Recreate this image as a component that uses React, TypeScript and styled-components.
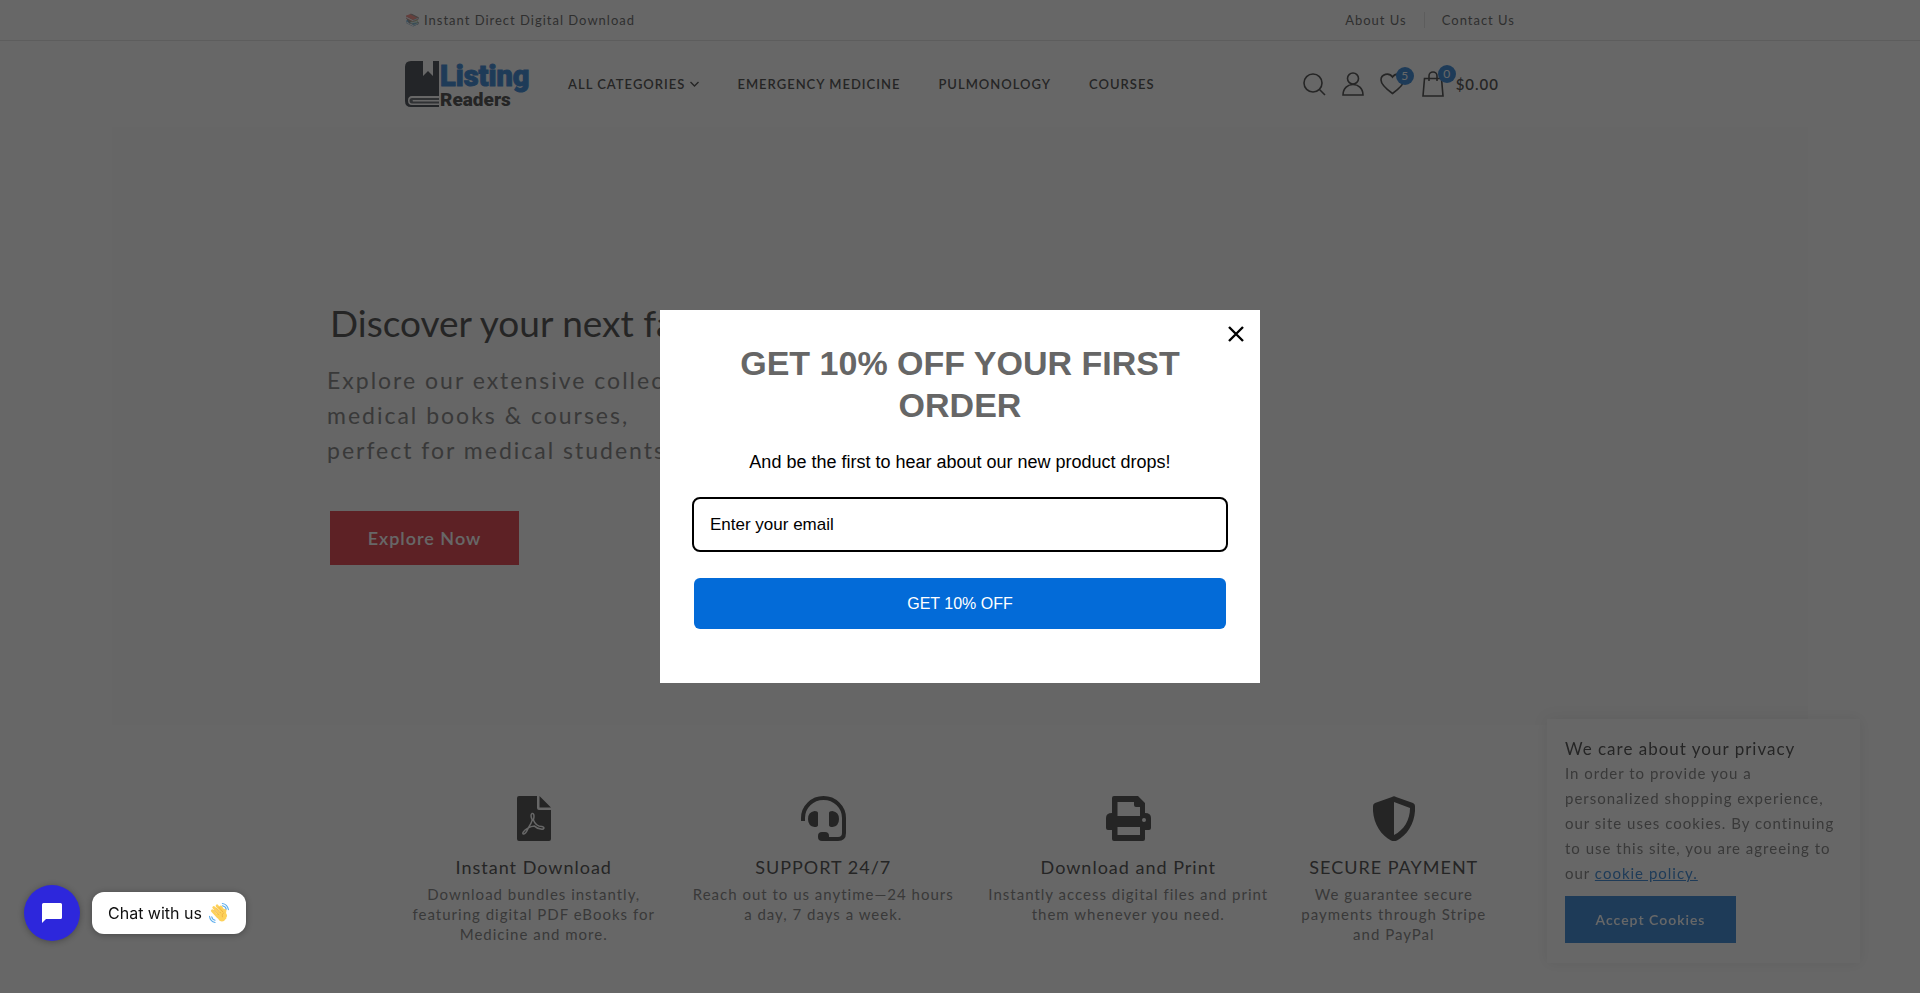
import React from 'react';
import styled, { createGlobalStyle } from 'styled-components';

const Global = createGlobalStyle`
  *, *::before, *::after { box-sizing: border-box; }
  html, body { height: 100%; }
  body {
    margin: 0;
    overflow: hidden;
    background: #fff;
    color: #666;
    font-family: Lato, "Noto Color Emoji", sans-serif;
    font-size: 15px;
    letter-spacing: 1px;
  }
  h1, h2, h3, p { margin: 0; font-weight: 400; }
  a { color: inherit; text-decoration: none; }
  button, input { font: inherit; border: 0; }
  button { cursor: pointer; }
`;

const Container = styled.div`
  display: flex;
  align-items: center;
  width: 100%;
  max-width: 1140px;
  margin: 0 auto;
  padding: 0 15px;
`;

const TopBar = styled.div`
  border-bottom: 1px solid #ddd;
  font-size: 13px;
  line-height: 40px;
  color: #444;
`;

const Announcement = styled.p`
  display: flex;
  align-items: center;
  gap: 4px;
  flex: 1;
`;

const Emoji = styled.span<{ $size: number; $faded?: boolean }>`
  font-family: "Noto Color Emoji", sans-serif;
  font-size: ${p => p.$size}px;
  letter-spacing: 0;
  opacity: ${p => (p.$faded ? 0.7 : 1)};
`;

const TopLinks = styled.nav`
  display: flex;
  align-items: center;
`;

const TopLink = styled.a`
  & + & {
    display: flex;
    align-items: center;
  }
  & + &::before {
    content: "";
    height: 16px;
    margin: 0 17px;
    border-left: 1px solid #ddd;
  }
`;

const HeaderRow = styled(Container)`
  height: 86px;
`;

const LogoLink = styled.a`
  display: flex;
  width: 126px;
  margin-right: 37px;
`;

const MainNav = styled.nav`
  display: flex;
  align-items: center;
  flex: 1;
  gap: 38px;
  font-size: 13px;
  font-weight: 600;
  text-transform: uppercase;
  color: #222;
`;

const NavLink = styled.a`
  display: flex;
  align-items: center;
  gap: 5px;
  white-space: nowrap;
`;

const Tools = styled.div`
  display: flex;
  align-items: center;
  gap: 16px;
  padding-right: 16px;
  color: #222;
`;

const Tool = styled.button`
  position: relative;
  display: flex;
  align-items: center;
  padding: 0;
  background: none;
  color: inherit;
`;

const Badge = styled.span`
  position: absolute;
  top: -6px;
  left: 16px;
  width: 18px;
  height: 18px;
  border-radius: 50%;
  background: #0d6dcd;
  color: #fff;
  font-size: 12px;
  line-height: 18px;
  letter-spacing: 0;
  text-align: center;
`;

const CartTotal = styled.span`
  margin-left: 12px;
  font-size: 15px;
  font-weight: 600;
  letter-spacing: 1px;
`;

const Hero = styled.section`
  display: flex;
  flex-direction: column;
  align-items: flex-start;
  justify-content: center;
  height: 598px;
  margin: 0 112px;
  padding: 10px 0 0 215px;
  background: #fafafa;
`;

const HeroTitle = styled.h1`
  padding-left: 3px;
  font-size: 37px;
  line-height: 50px;
  letter-spacing: 0;
  color: #222;
`;

const HeroText = styled.p`
  margin-top: 15px;
  font-size: 23px;
  line-height: 35px;
  letter-spacing: 2px;
  white-space: pre-line;
`;

const HeroButton = styled.button`
  width: 189px;
  height: 54px;
  margin: 43px 0 0 3px;
  background: #dc1423;
  color: #fff;
  font-size: 18px;
  font-weight: 600;
  letter-spacing: 1px;
`;

const Features = styled.section`
  display: grid;
  grid-template-columns: 257fr 321fr 288fr 242fr;
  max-width: 1140px;
  margin: 0 auto;
  padding: 71px 15px;
`;

const Feature = styled.article`
  display: flex;
  flex-direction: column;
  align-items: center;
  text-align: center;
  line-height: 20px;
  white-space: pre-line;
`;

const FeatureTitle = styled.h3`
  margin: 14px 0 5px;
  font-size: 18px;
  line-height: 24px;
  color: #222;
`;

const CookiePanel = styled.aside`
  position: fixed;
  right: 60px;
  bottom: 30px;
  width: 313px;
  padding: 18px 18px 20px;
  background: #fff;
  box-shadow: 0 0 14px rgba(0, 0, 0, 0.1);
  line-height: 25px;
`;

const CookieTitle = styled.h2`
  font-size: 17px;
  line-height: 24px;
  color: #222;
`;

const PolicyLink = styled.a`
  color: #0d6dcd;
  text-decoration: underline;
`;

const CookieButton = styled.button`
  display: block;
  width: 171px;
  height: 47px;
  margin-top: 10px;
  background: #0d6dcd;
  color: #fff;
  font-size: 14px;
  font-weight: 600;
  letter-spacing: 1px;
`;

const Overlay = styled.div`
  position: fixed;
  inset: 0;
  display: flex;
  align-items: center;
  justify-content: center;
  background: rgba(38, 38, 38, 0.7);
`;

const Modal = styled.form`
  position: relative;
  width: 600px;
  padding: 32px 32px 54px;
  background: #fff;
  font-family: "Liberation Sans", Arial, sans-serif;
  letter-spacing: 0;
  text-align: center;
`;

const CloseButton = styled.button`
  position: absolute;
  top: 8px;
  right: 8px;
  display: flex;
  align-items: center;
  justify-content: center;
  width: 32px;
  height: 32px;
  padding: 0;
  background: none;
  color: #000;
`;

const ModalTitle = styled.h2`
  font-size: 34px;
  font-weight: 700;
  line-height: 42px;
  color: #666;
`;

const ModalText = styled.p`
  margin: 24px 0 23px;
  font-size: 18px;
  line-height: 24px;
  color: #000;
`;

const EmailInput = styled.input`
  display: block;
  width: 100%;
  height: 55px;
  padding: 0 16px;
  border: 2px solid #000;
  border-radius: 8px;
  background: #fff;
  color: #000;
  font-size: 17px;
  outline: 0;
  &::placeholder { color: #000; opacity: 1; }
`;

const SubmitButton = styled.button`
  display: block;
  width: calc(100% - 4px);
  height: 51px;
  margin: 26px auto 0;
  border-radius: 6px;
  background: #036bd8;
  color: #fff;
  font-size: 16px;
`;

const Chat = styled.div`
  position: fixed;
  left: 24px;
  bottom: 52px;
  display: flex;
  align-items: center;
  gap: 12px;
`;

const ChatButton = styled.button`
  display: flex;
  align-items: center;
  justify-content: center;
  width: 56px;
  height: 56px;
  padding: 0;
  border-radius: 50%;
  background: #2d27dc;
  box-shadow: 0 1px 6px rgba(0, 0, 0, 0.3);
`;

const ChatBubble = styled.button`
  display: flex;
  align-items: center;
  gap: 7px;
  height: 42px;
  padding: 0 17px 0 16px;
  border-radius: 12px;
  background: #fff;
  box-shadow: 0 1px 6px rgba(0, 0, 0, 0.3);
  color: #111;
  font-family: Inter, sans-serif;
  font-size: 16px;
  letter-spacing: 0;
`;

const Logo = () => (
  <svg width="126" height="46" viewBox="0 0 126 46" overflow="visible" role="img" aria-label="Listing Readers">
    <path fill="#1c222c" d="M6 0H18V15L23 10L28 15V0H34V35H7Q3 35 3 39.500Q3 44 7 44H34V46H6Q0 46 0 40V6Q0 0 6 0Z" />
    <path fill="#1c222c" d="M7 37H34V39H8Q7 39.500 8 40.500H34V42.500H7Q4.500 42.500 4.500 39.500Q4.500 37 7 37Z" opacity=".8" />
    <text x="35" y="25" fontFamily="Roboto" fontWeight="900" fontSize="29" letterSpacing="0" fill="#0d6dcd" stroke="#0d6dcd">Listing</text>
    <text x="35" y="45" fontFamily="Roboto" fontWeight="900" fontSize="19" letterSpacing="0" fill="#222">Readers</text>
  </svg>
);

const Stroke = ({ w, h, d, sw = 1.6 }: { w: number; h: number; d: string; sw?: number }) => (
  <svg width={w} height={h} viewBox={`0 0 ${w} ${h}`} fill="none" stroke="currentColor" strokeWidth={sw} aria-hidden="true">
    <path d={d} />
  </svg>
);

const PdfIcon = () => (
  <svg width="34" height="45" viewBox="0 0 34 45" fill="#222" aria-hidden="true">
    <path d="M2 0H20V12Q20 14 22 14H34V43Q34 45 32 45H2Q0 45 0 43V2Q0 0 2 0ZM22.500 0L34 11.500H22.500Z" />
    <path fill="none" stroke="#fff" strokeWidth="1.500" strokeLinejoin="round" d="M15 17.500c2-.8 2.600 3 1.400 6.500c1.500 4 4.500 6.500 8.500 6.500c3.500.8 2 3.200-1 2.600c-3-.4-5-1.600-6.400-3c-2.200.2-4.400.8-6.200 1.800c-1.400 3.400-3 6-4.600 6.200c-2.200 0-.2-3.800 4.600-6.200c2-3 3.400-5.500 4-8c-1.400-3-1.600-5.500-.3-6.400Z" />
  </svg>
);

const HeadsetIcon = () => (
  <svg width="45" height="45" viewBox="0 0 45 45" fill="#222" aria-hidden="true">
    <path fill="none" stroke="#222" strokeWidth="4" d="M2 25V22A20.500 20 0 0 1 43 22V37Q43 43 37 43H22" />
    <path d="M17 17V29Q17 31 13.500 31Q7 30 7 23Q7 16 13.500 15Q17 15 17 17ZM28 17V29Q28 31 31.500 31Q38 30 38 23Q38 16 31.500 15Q28 15 28 17Z" />
    <rect x="17" y="36" width="11" height="9" rx="4" />
  </svg>
);

const PrinterIcon = () => (
  <svg width="45" height="45" viewBox="0 0 45 45" fill="#222" fillRule="evenodd" aria-hidden="true">
    <path d="M8 0H32L39 7V17Q45 17 45 22V32Q45 34 43 34H39V43Q39 45 37 45H8Q6 45 6 43V34H2Q0 34 0 32V22Q0 17 6 17V2Q6 0 8 0ZM11.500 6V20H34V11H30Q28 11 28 9V6ZM11.500 31V39H34V31ZM38 22A2 2 0 1 0 38 26A2 2 0 1 0 38 22Z" />
  </svg>
);

const ShieldIcon = () => (
  <svg width="42" height="45" viewBox="0 0 42 45" fill="#222" fillRule="evenodd" aria-hidden="true">
    <path d="M19 1Q21 -.5 23 1L40 7Q42 8 42 10C43 25 35 39 24 44.500Q21 45.500 18 44.500C7 39 -1 25 0 10Q0 8 2 7ZM21 6V39C31 34 37 24 37 12Z" />
  </svg>
);

const WaveIcon = () => (
  <svg width="20" height="20" viewBox="0 0 36 36" fill="none" strokeLinecap="round" aria-hidden="true">
    <g stroke="#fdd15a" strokeWidth="5">
      <path d="M6 14L16 25M8.500 8L20 21M14.500 5L25 18M21 7L28 17M29 13Q27 18 30 23" />
    </g>
    <path fill="#fdd15a" d="M12 22L25 12Q34 20 31 28Q26 36 19 32Z" />
    <path stroke="#e8a33b" strokeWidth="1.200" d="M9 13L17 21M13 9L21 18M18 8L25 16M24 25Q22 21 26 18" />
    <path stroke="#5dadec" strokeWidth="2" d="M24 1Q33 2 35 12M24 5Q30 6 31 11M1 24Q2 33 11 35M5 25Q6 30 11 31" />
  </svg>
);

const features = [
  { icon: <PdfIcon />, title: 'Instant Download', text: 'Download bundles instantly,\nfeaturing digital PDF eBooks for\nMedicine and more.' },
  { icon: <HeadsetIcon />, title: 'SUPPORT 24/7', text: 'Reach out to us anytime—24 hours\na day, 7 days a week.' },
  { icon: <PrinterIcon />, title: 'Download and Print', text: 'Instantly access digital files and print\nthem whenever you need.' },
  { icon: <ShieldIcon />, title: 'SECURE PAYMENT', text: 'We guarantee secure\npayments through Stripe\nand PayPal' },
];

export default function App() {
  return (
    <>
      <Global />
      <header>
        <TopBar>
          <Container>
            <Announcement><Emoji $size={12} $faded aria-hidden="true">📚</Emoji>Instant Direct Digital Download</Announcement>
            <TopLinks>
              <TopLink href="#about">About Us</TopLink>
              <TopLink href="#contact">Contact Us</TopLink>
            </TopLinks>
          </Container>
        </TopBar>
        <HeaderRow>
          <LogoLink href="#home"><Logo /></LogoLink>
          <MainNav>
            <NavLink href="#categories">All Categories <Stroke w={9} h={6} sw={1.4} d="M0.500 1L4.500 5L8.500 1" /></NavLink>
            <NavLink href="#emergency">Emergency Medicine</NavLink>
            <NavLink href="#pulmonology">Pulmonology</NavLink>
            <NavLink href="#courses">Courses</NavLink>
          </MainNav>
          <Tools>
            <Tool aria-label="Search"><Stroke w={23} h={23} d="M19 10A9 9 0 1 1 1 10A9 9 0 1 1 19 10M16 16L22 22" /></Tool>
            <Tool aria-label="Account"><Stroke w={22} h={24} d="M16.500 6.500A5.500 5.500 0 1 1 5.500 6.500A5.500 5.500 0 1 1 16.500 6.500M1 23C1 9 21 9 21 23Z" /></Tool>
            <Tool aria-label="Wishlist"><Stroke w={26} h={22} d="M12.500 20.500C7 16.500 1 12 1 7C1 1 9 -1 12.500 4C16 -1 24 1 24 7C24 12 18 16.500 12.500 20.500Z" /><Badge>5</Badge></Tool>
            <Tool aria-label="Cart">
              <Stroke w={22} h={26} d="M2.500 7.500H19.500L21 25H1ZM7 10V5A4 4 0 0 1 15 5V10" /><Badge>0</Badge>
              <CartTotal>$0.00</CartTotal>
            </Tool>
          </Tools>
        </HeaderRow>
      </header>

      <main>
        <Hero>
          <HeroTitle>Discover your next favorite read.</HeroTitle>
          <HeroText>{'Explore our extensive collection of\nmedical books & courses,\nperfect for medical students.'}</HeroText>
          <HeroButton>Explore Now</HeroButton>
        </Hero>
        <Features>
          {features.map(f => (
            <Feature key={f.title}>
              {f.icon}
              <FeatureTitle>{f.title}</FeatureTitle>
              <p>{f.text}</p>
            </Feature>
          ))}
        </Features>
      </main>

      <CookiePanel>
        <CookieTitle>We care about your privacy</CookieTitle>
        <p>
          In order to provide you a personalized shopping experience, our site uses cookies. By continuing
          to use this site, you are agreeing to our <PolicyLink href="#cookies">cookie policy.</PolicyLink>
        </p>
        <CookieButton>Accept Cookies</CookieButton>
      </CookiePanel>

      <Overlay>
        <Modal role="dialog" aria-modal="true" aria-labelledby="offer-title" onSubmit={e => e.preventDefault()}>
          <CloseButton type="button" aria-label="Close">
            <Stroke w={16} h={16} sw={2.4} d="M1 1L15 15M15 1L1 15" />
          </CloseButton>
          <ModalTitle id="offer-title">GET 10% OFF YOUR FIRST ORDER</ModalTitle>
          <ModalText>And be the first to hear about our new product drops!</ModalText>
          <EmailInput type="email" aria-label="Enter your email" placeholder="Enter your email" />
          <SubmitButton type="submit">GET 10% OFF</SubmitButton>
        </Modal>
      </Overlay>

      <Chat>
        <ChatButton aria-label="Open chat">
          <svg width="20" height="20" viewBox="0 0 20 20" fill="#fff" aria-hidden="true">
            <path d="M1.500 0H18.500Q20 0 20 1.500V14.500Q20 16 18.500 16H4L0 20V1.500Q0 0 1.500 0Z" />
          </svg>
        </ChatButton>
        <ChatBubble>Chat with us <WaveIcon /></ChatBubble>
      </Chat>
    </>
  );
}
